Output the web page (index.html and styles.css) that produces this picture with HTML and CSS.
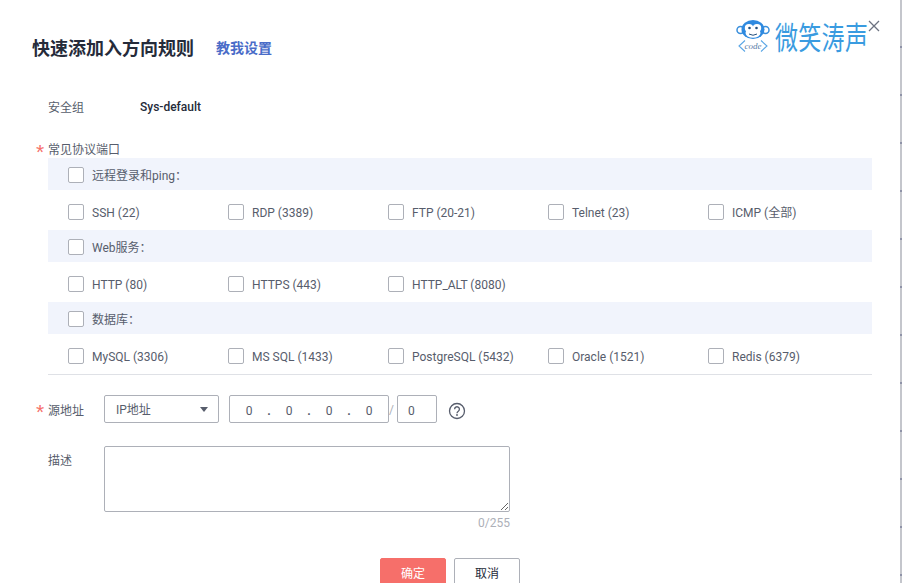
FILE: index.html
```html
<!DOCTYPE html>
<html lang="zh-CN">
<head>
  <meta charset="UTF-8" />
  <meta name="viewport" content="width=device-width, initial-scale=1.0"/>
  <title>快速添加入方向规则</title>
  <link rel="stylesheet" href="styles.css">
</head>
<body>

  <div class="dialog">
    <button class="close" type="button" aria-label="关闭">
      <svg width="12" height="12" viewBox="0 0 12 12"><path d="M1 1l10 10M11 1L1 11" stroke="#6c7280" stroke-width="1.3" fill="none"/></svg>
    </button>

    <div class="header">
      <h1>快速添加入方向规则</h1>
      <a class="help-link" href="#">教我设置</a>
      <div class="logo">
        <svg class="logo-mark" width="34" height="32" viewBox="0 0 34 32">
          <circle cx="4.500" cy="10" r="3.500" fill="#fff" stroke="#3a8fdc" stroke-width="1.500"/>
          <circle cx="29.500" cy="10" r="3.500" fill="#fff" stroke="#3a8fdc" stroke-width="1.500"/>
          <ellipse cx="17" cy="9.500" rx="11.500" ry="9.500" fill="#2f8ae0"/>
          <ellipse cx="13" cy="8" rx="4.200" ry="4" fill="#fff"/>
          <ellipse cx="21" cy="8" rx="4.200" ry="4" fill="#fff"/>
          <ellipse cx="17" cy="13" rx="7.500" ry="4.800" fill="#fff"/>
          <circle cx="13.500" cy="8" r="1.300" fill="#24507e"/>
          <circle cx="20.500" cy="8" r="1.300" fill="#24507e"/>
          <path d="M13 14q4 2.500 8 0" stroke="#24507e" stroke-width="1" fill="none"/>
          <path d="M9 20.500L3 26l6 5.500M25 20.500L31 26l-6 5.500" stroke="#5aa6e6" stroke-width="1.100" fill="none"/>
          <text class="logo-code" x="17" y="29" text-anchor="middle">code</text>
        </svg>
        <span class="logo-text">微笑涛声</span>
      </div>
    </div>

    <div class="info-row">
      <span class="label">安全组</span>
      <span class="info-value">Sys-default</span>
    </div>

    <div class="label required ports-label">常见协议端口</div>

    <div class="ports">
      <div class="group-head"><span class="check"></span><span class="check-text">远程登录和ping：</span></div>
      <div class="group-items">
        <div class="item"><span class="check"></span><span class="check-text">SSH (22)</span></div>
        <div class="item"><span class="check"></span><span class="check-text">RDP (3389)</span></div>
        <div class="item"><span class="check"></span><span class="check-text">FTP (20-21)</span></div>
        <div class="item"><span class="check"></span><span class="check-text">Telnet (23)</span></div>
        <div class="item"><span class="check"></span><span class="check-text">ICMP (全部)</span></div>
      </div>

      <div class="group-head"><span class="check"></span><span class="check-text">Web服务：</span></div>
      <div class="group-items">
        <div class="item"><span class="check"></span><span class="check-text">HTTP (80)</span></div>
        <div class="item"><span class="check"></span><span class="check-text">HTTPS (443)</span></div>
        <div class="item"><span class="check"></span><span class="check-text">HTTP_ALT (8080)</span></div>
      </div>

      <div class="group-head"><span class="check"></span><span class="check-text">数据库：</span></div>
      <div class="group-items">
        <div class="item"><span class="check"></span><span class="check-text">MySQL (3306)</span></div>
        <div class="item"><span class="check"></span><span class="check-text">MS SQL (1433)</span></div>
        <div class="item"><span class="check"></span><span class="check-text">PostgreSQL (5432)</span></div>
        <div class="item"><span class="check"></span><span class="check-text">Oracle (1521)</span></div>
        <div class="item"><span class="check"></span><span class="check-text">Redis (6379)</span></div>
      </div>
    </div>

    <div class="source-row">
      <span class="label required field-label">源地址</span>
      <div class="select">IP地址<span class="caret"></span></div>
      <div class="ip-box">
        <span class="seg">0</span><span class="dot">.</span>
        <span class="seg">0</span><span class="dot">.</span>
        <span class="seg">0</span><span class="dot">.</span>
        <span class="seg">0</span>
      </div>
      <span class="slash">/</span>
      <div class="mask-box">0</div>
      <svg class="help-icon" width="18" height="18" viewBox="0 0 18 18">
        <circle cx="9" cy="9" r="7.500" fill="none" stroke="#575d6c" stroke-width="1.300"/>
        <path d="M6.600 7.200a2.400 2.400 0 1 1 3.700 2c-.9.600-1.300 1-1.300 2" fill="none" stroke="#575d6c" stroke-width="1.300"/>
        <circle cx="9" cy="13" r=".9" fill="#575d6c"/>
      </svg>
    </div>

    <div class="desc-row">
      <span class="label field-label">描述</span>
      <div class="desc-field">
        <textarea class="desc-input"></textarea>
        <div class="counter">0/255</div>
      </div>
    </div>

    <div class="actions">
      <button class="btn btn-primary" type="button">确定</button>
      <button class="btn" type="button">取消</button>
    </div>
  </div>

  <div class="page-edge"></div>

</body>
</html>
```

FILE: styles.css
```css
* {
  margin: 0;
  padding: 0;
  box-sizing: border-box;
}

html, body {
  height: 100%;
  overflow: hidden;
}

body {
  display: flex;
  font-family: Roboto, "Noto Sans CJK SC", sans-serif;
  font-size: 12px;
  line-height: 18px;
  color: #575d6c;
  background: #fff;
}

.dialog {
  position: relative;
  flex: none;
  width: 900px;
  height: 583px;
  padding: 0 28px 0 48px;
  background: #fff;
  overflow: hidden;
}

.page-edge {
  flex: 1;
  background: repeating-linear-gradient(to bottom, #c4c6cc 0, #c4c6cc 46px, #8f93a8 46px, #8f93a8 48px);
}

.close {
  position: absolute;
  top: 20px;
  left: 868px;
  width: 12px;
  height: 12px;
  display: flex;
  border: none;
  background: none;
  cursor: pointer;
}

.header {
  display: flex;
  align-items: center;
  height: 98px;
  margin-left: -16px;
}

h1 {
  font-size: 18px;
  font-weight: 700;
  line-height: 24px;
  color: #252b3a;
}

.help-link {
  margin: -2px 0 0 22px;
  font-size: 14px;
  font-weight: 700;
  color: #4a6cc8;
  text-decoration: none;
}

.logo {
  display: flex;
  align-items: flex-start;
  align-self: flex-start;
  margin: 20px 4px 0 auto;
}

.logo-mark {
  display: block;
}

.logo-code {
  font-family: "Liberation Serif", serif;
  font-size: 9px;
  font-style: italic;
  fill: #5c7ea8;
}

.logo-text {
  margin: -1px 0 0 5px;
  width: 93px;
  font-family: "Noto Sans CJK SC", sans-serif;
  font-size: 23px;
  line-height: 32px;
  letter-spacing: .3px;
  white-space: nowrap;
  color: #3a9be0;
  transform: scaleY(1.35);
}

.label {
  position: relative;
  color: #575d6c;
}

.required::before {
  content: "*";
  position: absolute;
  left: -12px;
  top: 2px;
  font-family: "Liberation Sans", sans-serif;
  font-size: 21px;
  color: #f66f6a;
}

.info-row {
  display: flex;
  height: 18px;
}

.info-row .label {
  width: 92px;
  line-height: 20px;
}

.info-value {
  font-weight: 500;
  color: #252b3a;
}

.ports-label {
  height: 18px;
  margin-top: 24px;
  line-height: 20px;
}

.group-head {
  display: flex;
  align-items: center;
  gap: 8px;
  height: 32px;
  padding: 2px 0 0 20px;
  background: #f1f4fc;
}

.group-items {
  display: grid;
  grid-template-columns: repeat(5, 160px);
  height: 40px;
  padding: 4px 0 0 20px;
}

.item {
  display: flex;
  align-items: center;
  gap: 8px;
}

.check {
  flex: none;
  width: 16px;
  height: 16px;
  border: 1px solid #adb0b8;
  border-radius: 2px;
  background: #fff;
}

.check-text {
  padding-top: 2px;
}

.ports {
  border-bottom: 1px solid #dfe1e6;
}

.source-row {
  display: flex;
  align-items: center;
  margin-top: 20px;
}

.field-label {
  flex: none;
  width: 56px;
}

.source-row .field-label {
  padding-top: 4px;
}

.source-row .required::before {
  top: 5px;
}

.select {
  position: relative;
  width: 115px;
  height: 28px;
  padding-left: 11px;
  line-height: 28px;
  border: 1px solid #adb0b8;
  border-radius: 2px;
}

.caret {
  position: absolute;
  right: 10px;
  top: 11px;
  border-left: 4px solid transparent;
  border-right: 4px solid transparent;
  border-top: 5px solid #575d6c;
}

.ip-box {
  display: flex;
  width: 160px;
  height: 28px;
  margin-left: 10px;
  padding: 0 3px 0 4px;
  line-height: 30px;
  border: 1px solid #adb0b8;
  border-radius: 2px;
}

.seg {
  width: 30px;
  text-align: center;
}

.dot {
  width: 10px;
  text-align: center;
  font-weight: 700;
}

.slash {
  width: 8px;
  padding-top: 2px;
  color: #adb0b8;
}

.mask-box {
  width: 40px;
  height: 28px;
  padding-left: 10px;
  line-height: 30px;
  border: 1px solid #adb0b8;
  border-radius: 2px;
}

.help-icon {
  margin: 4px 0 0 11px;
}

.desc-row {
  display: flex;
  margin-top: 23px;
}

.desc-row .field-label {
  padding-top: 6px;
}

.desc-field {
  width: 406px;
}

.desc-input {
  display: block;
  width: 406px;
  height: 66px;
  border: 1px solid #adb0b8;
  border-radius: 2px;
  outline: none;
  resize: vertical;
  font: inherit;
}

.counter {
  margin-top: 2px;
  text-align: right;
  color: #adb0b8;
}

.actions {
  display: flex;
  justify-content: center;
  gap: 8px;
  margin: 26px 0 0 -48px;
  width: 900px;
}

.btn {
  flex: none;
  width: 66px;
  height: 32px;
  border: 1px solid #adb0b8;
  border-radius: 2px;
  background: #fff;
  font: inherit;
  color: #252b3a;
  cursor: pointer;
}

.btn-primary {
  border-color: #f66f6a;
  background: #f66f6a;
  color: #fff;
}
```
